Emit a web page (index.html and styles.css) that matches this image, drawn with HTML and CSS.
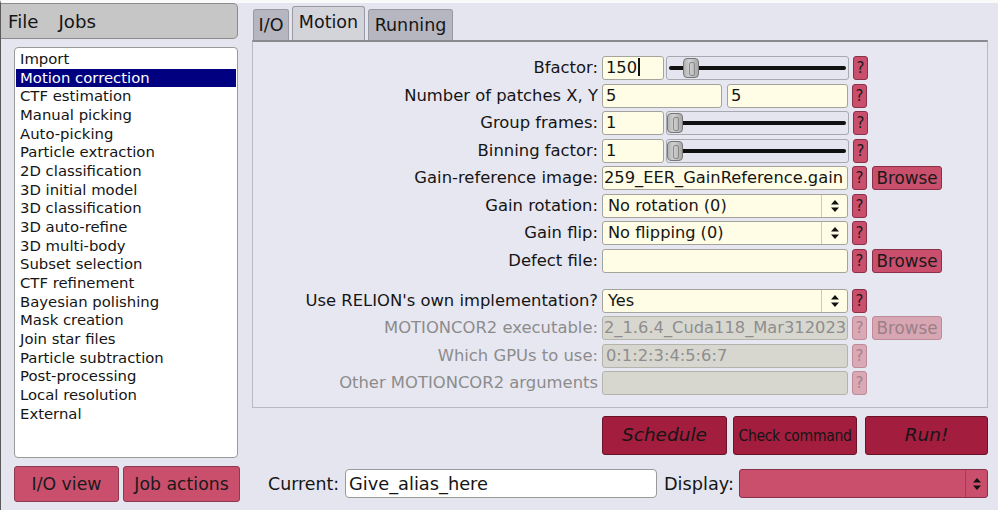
FILE: index.html
```html
<!DOCTYPE html>
<html>
<head>
<meta charset="utf-8">
<link rel="stylesheet" href="styles.css">
</head>
<body>
<div class="app">
  <div class="left">
    <div class="menubar"><span>File</span><span>Jobs</span></div>
    <div class="joblist">
      <div class="item">Import</div>
      <div class="item sel">Motion correction</div>
      <div class="item">CTF estimation</div>
      <div class="item">Manual picking</div>
      <div class="item">Auto-picking</div>
      <div class="item">Particle extraction</div>
      <div class="item">2D classification</div>
      <div class="item">3D initial model</div>
      <div class="item">3D classification</div>
      <div class="item">3D auto-refine</div>
      <div class="item">3D multi-body</div>
      <div class="item">Subset selection</div>
      <div class="item">CTF refinement</div>
      <div class="item">Bayesian polishing</div>
      <div class="item">Mask creation</div>
      <div class="item">Join star files</div>
      <div class="item">Particle subtraction</div>
      <div class="item">Post-processing</div>
      <div class="item">Local resolution</div>
      <div class="item">External</div>
    </div>
    <div class="leftbtns">
      <div class="pbtn w1">I/O view</div>
      <div class="pbtn w2">Job actions</div>
    </div>
  </div>
  <div class="right">
    <div class="tabs">
      <div class="tab t1">I/O</div>
      <div class="tab t2 active">Motion</div>
      <div class="tab t3">Running</div>
    </div>
    <div class="panel">
      <div class="row">
        <div class="lbl">Bfactor:</div>
        <div class="inp short">150<span class="caret"></span></div>
        <div class="slider"><div class="track"></div><div class="knob" style="left:16px"></div></div>
        <div class="help">?</div>
      </div>
      <div class="row">
        <div class="lbl">Number of patches X, Y</div>
        <div class="inp half">5</div>
        <div class="inp half2">5</div>
        <div class="help">?</div>
      </div>
      <div class="row">
        <div class="lbl">Group frames:</div>
        <div class="inp short">1</div>
        <div class="slider"><div class="track"></div><div class="knob" style="left:0px"></div></div>
        <div class="help">?</div>
      </div>
      <div class="row">
        <div class="lbl">Binning factor:</div>
        <div class="inp short">1</div>
        <div class="slider"><div class="track"></div><div class="knob" style="left:0px"></div></div>
        <div class="help">?</div>
      </div>
      <div class="row">
        <div class="lbl">Gain-reference image:</div>
        <div class="inp wide clip">259_EER_GainReference.gain</div>
        <div class="help">?</div>
        <div class="browse">Browse</div>
      </div>
      <div class="row">
        <div class="lbl">Gain rotation:</div>
        <div class="choice"><span class="ctext">No rotation (0)</span><span class="arrows"><svg width="10" height="16" viewBox="0 0 10 16"><path d="M1 6.5 L5 2 L9 6.5 Z M1 9.5 L5 14 L9 9.5 Z" fill="#111"/></svg></span></div>
        <div class="help">?</div>
      </div>
      <div class="row">
        <div class="lbl">Gain flip:</div>
        <div class="choice"><span class="ctext">No flipping (0)</span><span class="arrows"><svg width="10" height="16" viewBox="0 0 10 16"><path d="M1 6.5 L5 2 L9 6.5 Z M1 9.5 L5 14 L9 9.5 Z" fill="#111"/></svg></span></div>
        <div class="help">?</div>
      </div>
      <div class="row">
        <div class="lbl">Defect file:</div>
        <div class="inp wide"></div>
        <div class="help">?</div>
        <div class="browse">Browse</div>
      </div>
      <div class="row gaptop">
        <div class="lbl">Use RELION's own implementation?</div>
        <div class="choice"><span class="ctext">Yes</span><span class="arrows"><svg width="10" height="16" viewBox="0 0 10 16"><path d="M1 6.5 L5 2 L9 6.5 Z M1 9.5 L5 14 L9 9.5 Z" fill="#111"/></svg></span></div>
        <div class="help">?</div>
      </div>
      <div class="row dis">
        <div class="lbl">MOTIONCOR2 executable:</div>
        <div class="inp wide clip">2_1.6.4_Cuda118_Mar312023</div>
        <div class="help">?</div>
        <div class="browse">Browse</div>
      </div>
      <div class="row dis">
        <div class="lbl">Which GPUs to use:</div>
        <div class="inp wide">0:1:2:3:4:5:6:7</div>
        <div class="help">?</div>
      </div>
      <div class="row dis">
        <div class="lbl">Other MOTIONCOR2 arguments</div>
        <div class="inp wide"></div>
        <div class="help">?</div>
      </div>
    </div>
    <div class="actions">
      <div class="rbtn b1 it">Schedule</div>
      <div class="rbtn b2 small">Check command</div>
      <div class="rbtn b3 it">Run!</div>
    </div>
    <div class="current">
      <span class="clbl">Current:</span>
      <div class="alias">Give_alias_here</div>
      <span class="dlbl">Display:</span>
      <div class="display"><span class="darrows"><svg width="10" height="16" viewBox="0 0 10 16"><path d="M1 6.5 L5 2 L9 6.5 Z M1 9.5 L5 14 L9 9.5 Z" fill="#111"/></svg></span></div>
    </div>
  </div>
</div>
</body>
</html>
```
FILE: styles.css
```css
* { box-sizing: border-box; }
html, body { margin: 0; padding: 0; }
body {
  width: 998px;
  height: 510px;
  background: #e5e5ef;
  font-family: "DejaVu Sans", "Liberation Sans", sans-serif;
  color: #151515;
  overflow: hidden;
  border-left: 1px solid #5a5a5a;
  border-top: 3px solid #fafafa;
}
.app { display: flex; height: 507px; }
.left { width: 251px; display: flex; flex-direction: column; }
.menubar {
  width: 237px; height: 36px;
  background: #c6c6c6;
  border: 1px solid #8c8c8c; border-left: none;
  border-radius: 0 5px 5px 0;
  display: flex; align-items: center; gap: 20px;
  padding-left: 7px; font-size: 18.2px;
}
.joblist {
  margin: 8px 0 0 13px;
  width: 224px; height: 411px;
  background: #fff;
  border: 1px solid #9a9a9a; border-radius: 4px;
  padding-top: 2px;
}
.item {
  height: 18.68px; line-height: 18.68px;
  margin: 0 1px; padding-left: 4px;
  font-size: 14.85px; white-space: nowrap;
}
.item.sel { background: #000080; color: #fff; }
.leftbtns { display: flex; gap: 4px; margin: 8px 0 0 13px; }
.pbtn {
  height: 36px; background: #c94f6d;
  border: 1px solid #8b3a4f; border-radius: 3px;
  display: flex; align-items: center; justify-content: center;
  font-size: 17.3px; color: #1a1a1a;
}
.w1 { width: 105px; }
.w2 { width: 117px; }

.right { width: 746px; display: flex; flex-direction: column; }
.tabs { height: 37px; display: flex; align-items: flex-end; gap: 3px; padding-left: 1px; }
.tab {
  height: 31px; background: #b6b6c0;
  border: 1px solid #9a9aa4; border-bottom: none;
  border-radius: 3px 3px 0 0;
  font-size: 17.5px; display: flex; align-items: center; justify-content: center;
}
.tab.active { height: 34px; background: #d3d3da; padding-bottom: 3px; }
.t1 { width: 36px; }
.t2 { width: 73px; }
.t3 { width: 85px; }
.panel {
  width: 736px; height: 368px;
  background: #e7e7f1;
  border: 1px solid #b8b8c4; border-top: 2px solid #8a8a90;
  padding-top: 14px;
}
.row { display: flex; height: 24px; margin-bottom: 3.5px; align-items: stretch; }
.row.gaptop { margin-top: 16px; }
.lbl {
  width: 349px; padding-right: 4px; text-align: right;
  font-size: 16.4px; line-height: 24px; white-space: nowrap;
}
.inp {
  background: #fffde5; border: 1px solid #a4a49c; border-radius: 3px;
  font-size: 16.3px; line-height: 22px; padding-left: 3px;
  white-space: nowrap; overflow: hidden;
}
.inp.short { width: 62px; }
.inp.half { width: 120px; }
.inp.half2 { width: 121px; margin-left: 5px; }
.inp.wide { width: 246px; }
.inp.clip { padding-left: 1px; }
.caret { display: inline-block; width: 2px; height: 18px; background: #111; vertical-align: -3px; margin-left: 1px; }
.slider {
  position: relative; width: 183px; margin-left: 2px;
  border: 1px solid #a8a8b0; border-radius: 3px; background: #e5e5ef;
  display: flex; align-items: center; padding: 0 2px;
}
.track { flex: 1; height: 4px; background: #111; border-radius: 2px; }
.knob {
  position: absolute; top: 1px; width: 16px; height: 20px;
  background: linear-gradient(90deg, #b4b4b4, #d0d0d0 40%, #a8a8a8);
  border: 1px solid #777; border-radius: 4px;
}
.knob::after {
  content: ""; position: absolute; left: 5px; top: 3px; width: 4px; height: 12px;
  border: 1px solid #8a8a8a; border-radius: 2px;
}
.help {
  width: 15px; margin-left: 4px;
  background: #c94f6d; border: 1px solid #8a3048; border-radius: 3px;
  font-size: 15px; line-height: 22px; text-align: center; color: #1a1a1a;
}
.browse {
  width: 70px; margin-left: 5px;
  background: #c94f6d; border: 1px solid #8a3048; border-radius: 3px;
  font-size: 16.8px; line-height: 22px; text-align: center; color: #1a1a1a;
}
.choice {
  width: 246px; display: flex;
  background: #fffde5; border: 1px solid #a4a49c; border-radius: 3px;
}
.ctext { flex: 1; padding-left: 5px; font-size: 16.2px; line-height: 22px; }
.arrows {
  width: 26px; border-left: 1px solid #c9c9bf;
  display: flex; align-items: center; justify-content: center;
}
.dis .lbl { color: #8c8c8c; }
.dis .inp { background: #d7d7d0; border-color: #b4b4ac; color: #8e8e8e; }
.dis .help { background: #d9a9b6; border-color: #c08a98; color: #a6808a; }
.dis .browse { background: #d8a6b3; border-color: #c08a98; color: #9a8088; }

.actions { display: flex; margin-top: 8px; padding-left: 350px; gap: 6px; }
.rbtn {
  height: 39px; background: #a21d3e;
  border: 1px solid #6a1228; border-radius: 3px;
  display: flex; align-items: center; justify-content: center; color: #151515;
}
.b1 { width: 125px; }
.b2 { width: 124px; }
.b3 { width: 123px; margin-left: 2px; }
.it { font-style: italic; font-size: 18.5px; padding-bottom: 2px; }
.small { font-size: 15.5px; font-family: "DejaVu Sans Condensed", "DejaVu Sans", sans-serif; font-stretch: condensed; letter-spacing: -0.3px; }
.current { display: flex; align-items: center; margin-top: 14px; padding-left: 16px; height: 29px; }
.clbl { font-size: 17.4px; width: 77px; }
.alias {
  width: 312px; height: 29px; background: #fff;
  border: 1px solid #9a9a9a; border-radius: 4px;
  font-size: 17.8px; line-height: 27px; padding-left: 3px;
}
.dlbl { font-size: 17.7px; margin-left: 7px; width: 75px; }
.display {
  width: 249px; height: 29px; background: #c94f6d;
  border: 1px solid #8a3048; border-radius: 3px;
  display: flex; justify-content: flex-end;
}
.darrows { width: 22px; border-left: 1px solid #a83a56; display: flex; align-items: center; justify-content: center; }
```
